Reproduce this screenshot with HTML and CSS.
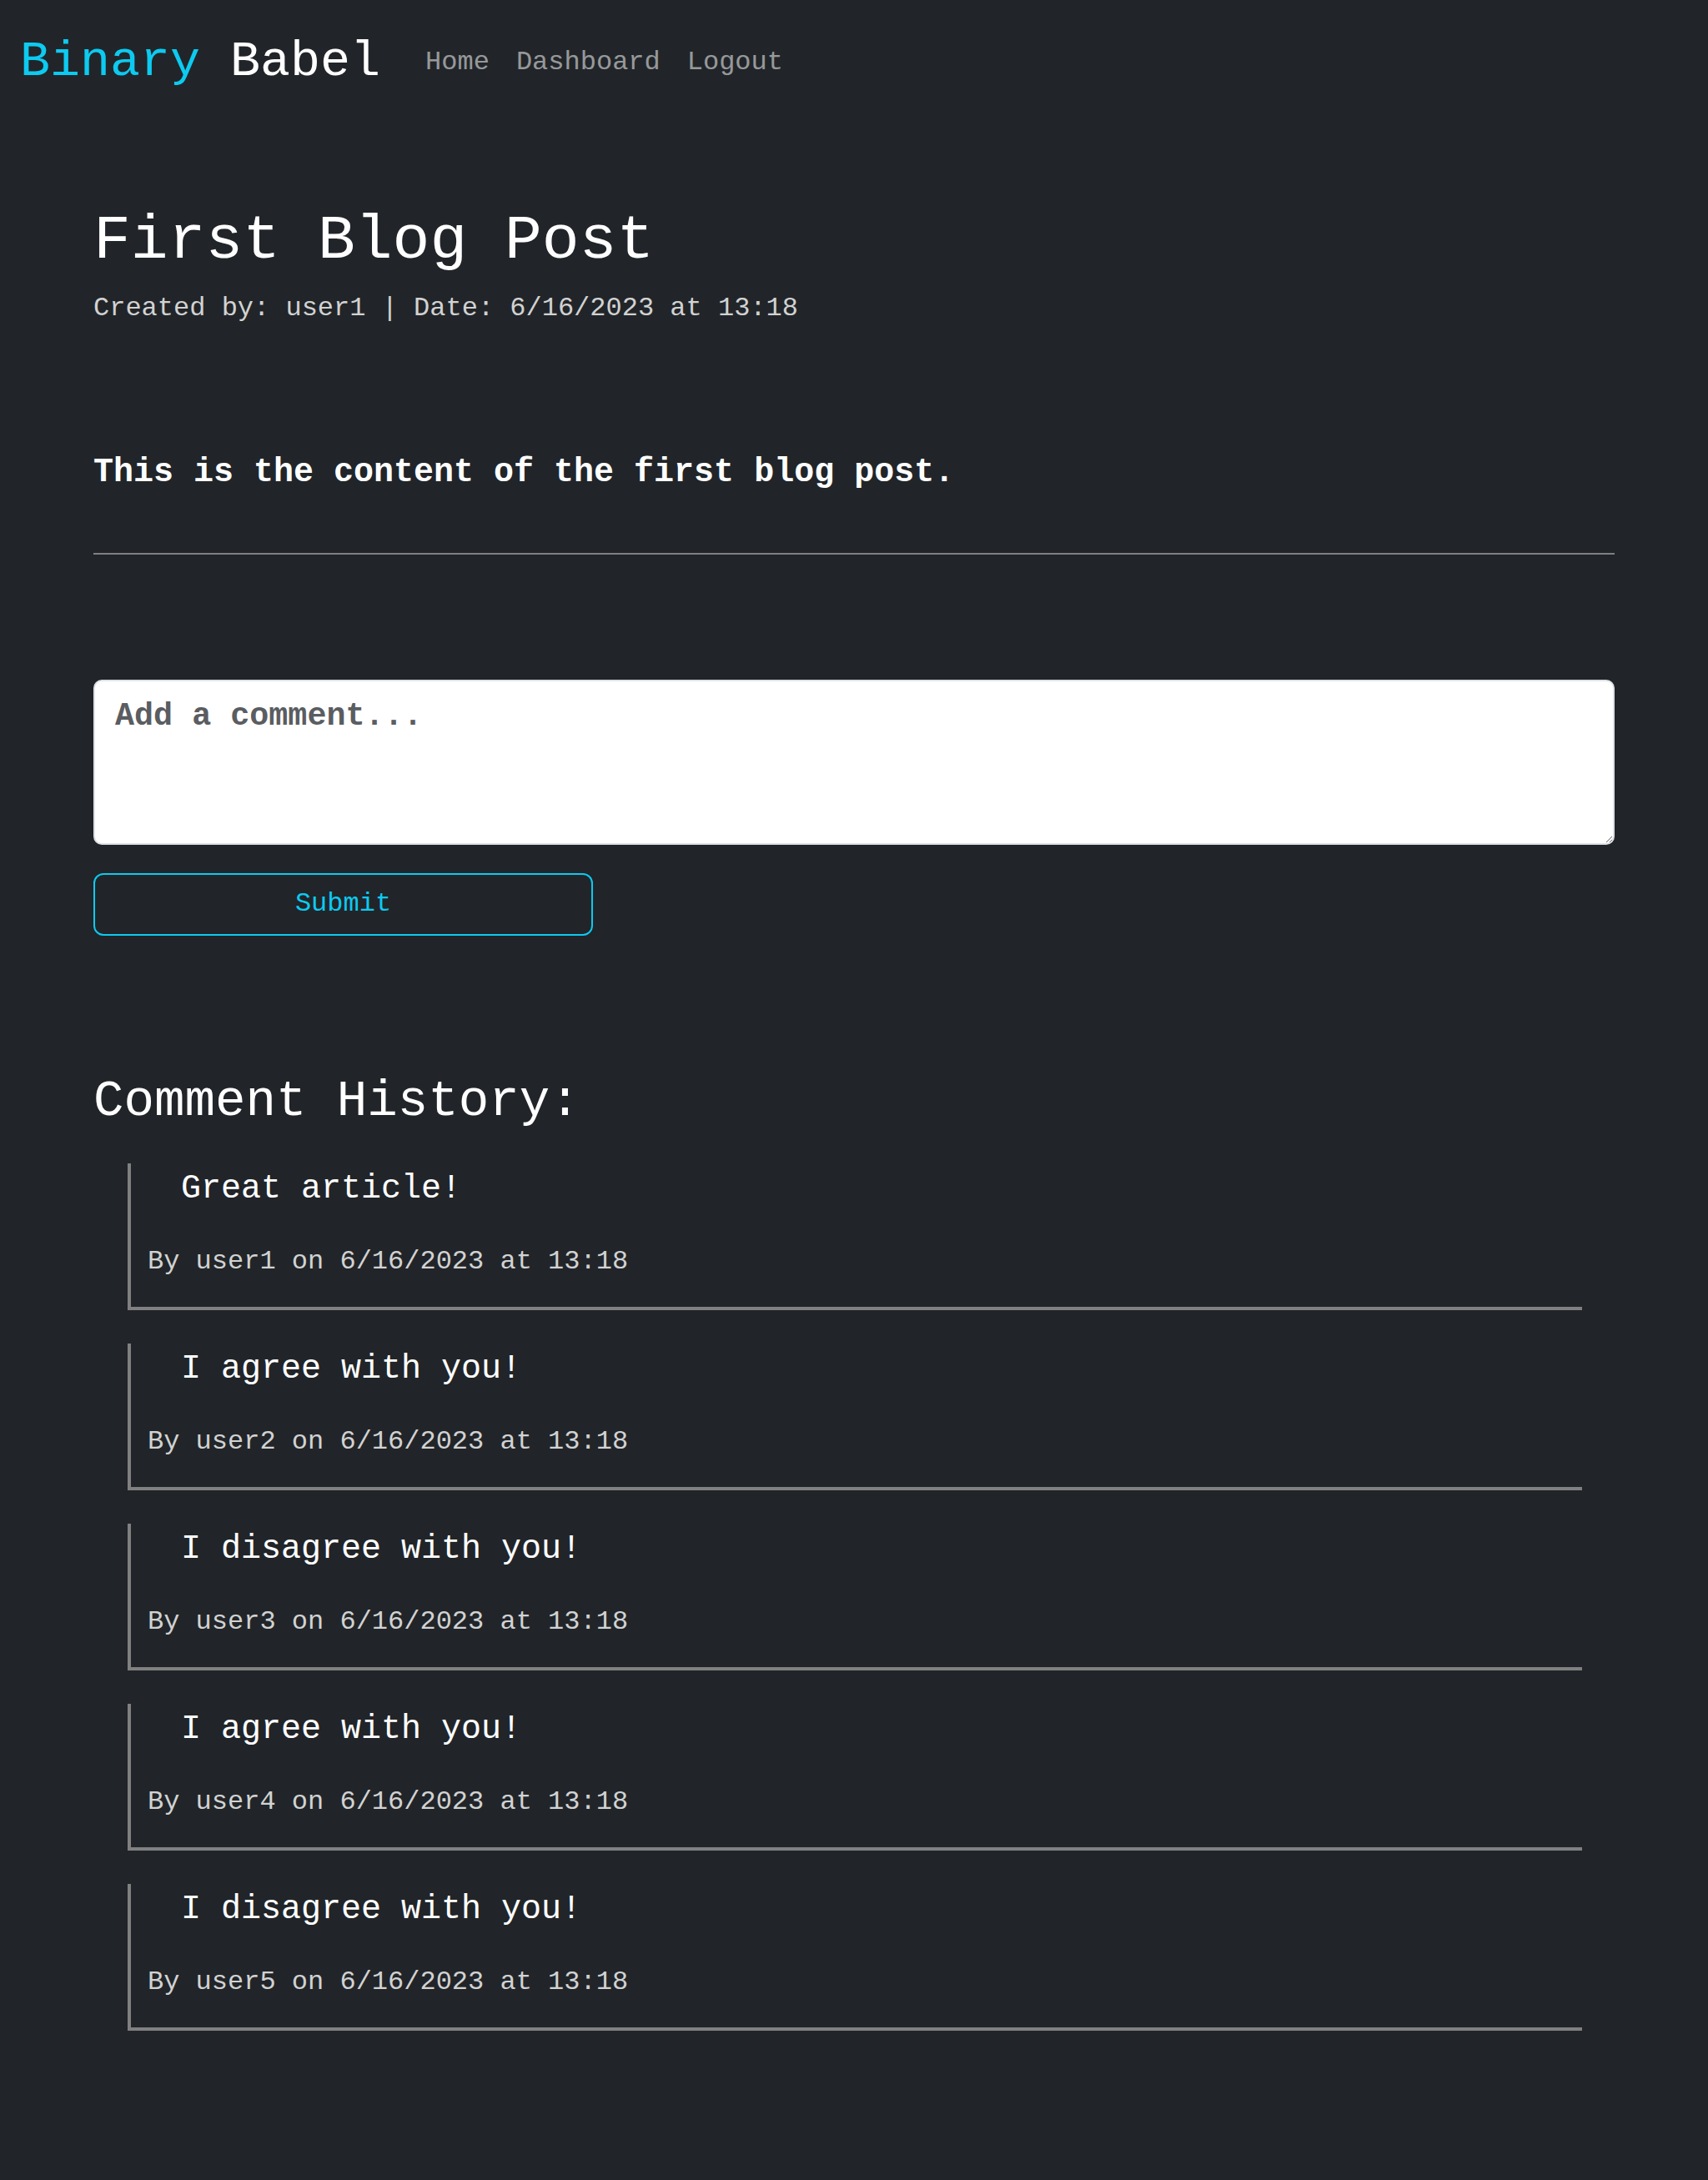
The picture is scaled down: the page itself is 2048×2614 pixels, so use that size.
FILE: index.html
```html
<!DOCTYPE html>
<html lang="en">
<head>
<meta charset="utf-8">
<title>Binary Babel</title>
<link rel="stylesheet" href="styles.css">
</head>
<body>
<nav class="navbar">
  <a class="brand" href="#"><span class="brand-accent">Binary</span> Babel</a>
  <ul class="nav-links">
    <li><a class="nav-link" href="#">Home</a></li>
    <li><a class="nav-link" href="#">Dashboard</a></li>
    <li><a class="nav-link" href="#">Logout</a></li>
  </ul>
</nav>
<main class="post">
  <h1 class="post-title">First Blog Post</h1>
  <p class="post-meta">Created by: user1 | Date: 6/16/2023 at 13:18</p>
  <p class="post-content">This is the content of the first blog post.</p>
  <hr class="divider">
  <form class="comment-form">
    <textarea class="comment-input" placeholder="Add a comment..."></textarea>
    <button type="button" class="submit-btn">Submit</button>
  </form>
  <h2 class="history-title">Comment History:</h2>
  <div class="comment">
    <p class="comment-text">Great article!</p>
    <p class="comment-meta">By user1 on 6/16/2023 at 13:18</p>
  </div>
  <div class="comment">
    <p class="comment-text">I agree with you!</p>
    <p class="comment-meta">By user2 on 6/16/2023 at 13:18</p>
  </div>
  <div class="comment">
    <p class="comment-text">I disagree with you!</p>
    <p class="comment-meta">By user3 on 6/16/2023 at 13:18</p>
  </div>
  <div class="comment">
    <p class="comment-text">I agree with you!</p>
    <p class="comment-meta">By user4 on 6/16/2023 at 13:18</p>
  </div>
  <div class="comment">
    <p class="comment-text">I disagree with you!</p>
    <p class="comment-meta">By user5 on 6/16/2023 at 13:18</p>
  </div>
</main>
</body>
</html>
```
FILE: styles.css
```css
html, body {
  margin: 0;
  padding: 0;
  background: #212529;
}
body {
  font-family: "Liberation Mono", "DejaVu Sans Mono", monospace;
  color: #ffffff;
  min-height: 2614px;
}
a { text-decoration: none; }

.navbar {
  display: flex;
  align-items: center;
  height: 148px;
  padding: 0 24px;
}
.brand {
  font-size: 60px;
  color: #ffffff;
  line-height: normal;
  margin-right: 38px;
}
.brand-accent { color: #0dcaf0; }
.nav-links {
  display: flex;
  list-style: none;
  margin: 0;
  padding: 0;
}
.nav-link {
  display: block;
  padding: 0 16px;
  font-size: 32px;
  line-height: normal;
  color: rgba(255, 255, 255, 0.55);
}

.post {
  margin: 0 112px;
  padding-bottom: 140px;
}
.post-title {
  font-size: 74.7px;
  font-weight: normal;
  line-height: 1.2;
  margin: 97px 0 11px;
}
.post-meta {
  font-size: 32px;
  line-height: 1.5;
  color: #d2d2d2;
  margin: 0;
}
.post-content {
  font-size: 40px;
  line-height: 1.5;
  font-weight: bold;
  margin: 143px 0 0;
}
.divider {
  border: 0;
  border-top: 2px solid #808080;
  margin: 66px 0 0;
  height: 0;
}
.comment-form {
  margin-top: 150px;
}
.comment-input {
  display: block;
  box-sizing: border-box;
  width: 100%;
  height: 198px;
  margin: 0;
  padding: 14px 24px;
  border: 2px solid #dee2e6;
  border-radius: 10px;
  background: #ffffff;
  font-family: "Liberation Mono", "DejaVu Sans Mono", monospace;
  font-size: 38.4px;
  line-height: 1.5;
  color: #212529;
}
.comment-input::placeholder {
  color: #5a5d61;
  font-weight: bold;
}
.submit-btn {
  display: block;
  box-sizing: border-box;
  width: 599px;
  height: 75px;
  margin-top: 34px;
  padding: 0;
  background: transparent;
  border: 2px solid #0dcaf0;
  border-radius: 12px;
  color: #0dcaf0;
  font-family: "Liberation Mono", "DejaVu Sans Mono", monospace;
  font-size: 32px;
  line-height: 1.5;
}
.history-title {
  font-size: 60.8px;
  font-weight: normal;
  line-height: 1.2;
  margin: 163px 0 37px;
}
.comment {
  margin: 0 39px 40px 41px;
  padding: 7px 0 30px 20px;
  border-left: 4px solid #808080;
  border-bottom: 4px solid #808080;
}
.comment-text {
  font-size: 40px;
  line-height: 1.2;
  margin: 0 0 39px 40px;
}
.comment-meta {
  font-size: 32px;
  line-height: 1.5;
  color: #d2d2d2;
  margin: 0;
}
```
